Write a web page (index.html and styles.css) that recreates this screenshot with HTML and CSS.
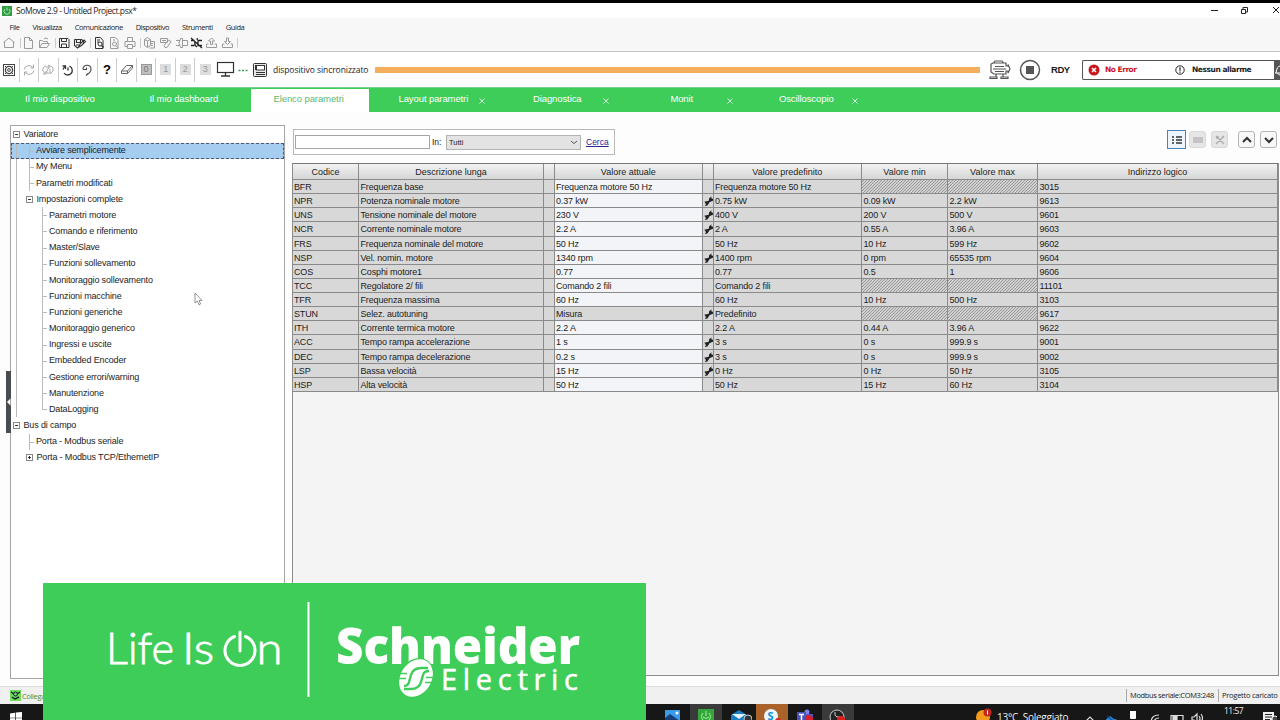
FILE: index.html
```html
<!DOCTYPE html>
<html lang="it">

<head>
    <meta charset="UTF-8">
    <meta name="viewport" content="width=device-width, initial-scale=1.0">
    <title>SoMove 2.9 - Untitled Project.psx*</title>
    <link rel="stylesheet" href="styles.css">
</head>

<body>
    <!-- shared icons -->
    <svg class="defs">
        <symbol id="wrench" viewBox="0 0 10 10">
            <path d="M2 8 L8 3" stroke="#222" stroke-width="2" />
            <path d="M5 5.500 L5 2.500 L7.500 .3 L7.200 2.500 L9.900 2.800 L8.600 5 L6.600 5.600 Z M.2 5.800 L3.600 5 L5 7 L3.400 9.400 L.8 9.900 L2.200 7.800 Z" fill="#222" />
        </symbol>
    </svg>

    <div class="window">
        <div class="titlebar">
            <svg class="app-icon" width="10" height="10" viewBox="0 0 10 10">
                <rect width="10" height="10" fill="#2f9e44" />
                <path d="M3 3a3 3 0 1 0 4 0M5 1.5v3" fill="none" stroke="#a8e6a8" stroke-width="1" />
            </svg>
            <span class="title">SoMove 2.9 - Untitled Project.psx*</span>
            <svg class="win-buttons" width="72" height="12" viewBox="0 0 72 12" fill="none" stroke="#222" stroke-width="1">
                <path d="M3 6.500h7M65 3l6 6M71 3l-6 6" />
                <path d="M33.500 5.500h4v4h-4zM35 5.500v-2h4.500v4.500h-2" />
            </svg>
        </div>

        <div class="menu">
            <span>File</span>
            <span>Visualizza</span>
            <span>Comunicazione</span>
            <span>Dispositivo</span>
            <span>Strumenti</span>
            <span>Guida</span>
        </div>

        <div class="quickbar">
            <svg width="242" height="16" viewBox="0 0 242 16" fill="none" stroke="#9a9a9a" stroke-width="1">
                <path d="M3.500 7.500l5.500-4.500 5.500 4.500M4.500 7v5.500h9v-5.500" />
                <path d="M24.500 2.500h5l3 3v8h-8zM29.500 2.500v3h3" />
                <path d="M39.500 12.500v-7h3l1 1h4v2M39.500 12.500l2.500-4h7.500l-2.500 4zM44 4q2-2 4 0" />
                <path d="M20.500 3v10M55.500 3v10M90.500 3v10M140.500 3v10M237.500 3v10" stroke="#ccc" />
                <g stroke="#333">
                    <path d="M59.500 3.500h8.500l1 1v8h-9.500zM61.500 3.500v3h5v-3M61.500 12.500v-3.500h5v3.500" />
                    <path d="M74.500 4.500h7l2 1.500v2M74.500 4.500v6l3 2.500 2-2M76.500 4.500v3h4v-3M79 12l1-3 4-4 1.500 1.500-4 4zM76 10h3" stroke-width="1.100" />
                    <path d="M95.500 2.500h5l2.500 3v8h-7.500zM97 5h3M97 7h2" />
                    <circle cx="100" cy="9" r="2" />
                    <path d="M101.500 10.500l2 2" stroke-width="1.500" />
                </g>
                <path d="M110.500 2.500h5l2.500 3v8h-7.500zM116 11l2 2M113 5h2" />
                <circle cx="114.500" cy="9" r="2" />
                <path d="M127.500 6v-3.500h5v3.500M127.500 11.500h-2.500v-5h10v5h-2.500M127.500 9.500h5v4h-5z" />
                <path d="M144.500 4.500l3-2 3 2v6l-3 2-3-2zM144.500 4.500l3 1.500 3-1.500M147.500 6v6M151 6.500h3.500v6.500h-5M151 8.500h2M151 10.500h2" />
                <path d="M160.500 3.500h7v4h-7zM162 5.500h4M168 5l3 1.500-4 6h-2l-1-2 4-5" />
                <path d="M176 5.500h4M176 10.500h4M180.500 3.500h2v9h-2q-3-4 0-9M183 5.500h4.500v5h-4.500" />
                <path d="M191 3l11 10M191 5.500h3.500M191 10.500h3.500M202 5.500h-4v5h4M196.500 4h1.500M195 6q-1 4 2 6" stroke="#222" stroke-width="1.300" />
                <path d="M206.500 9v3.500h10v-3.500h-2M206.500 9h2M210.500 9.500v-3.500h-2l3-3 3 3h-2v3.500z" />
                <path d="M222.500 9v3.500h10v-3.500h-2M222.500 9h2M226.500 3v3.500h-2l3 3 3-3h-2v-3.500z" />
            </svg>
        </div>

        <div class="toolbar">
            <div class="tool"><svg width="14" height="14" viewBox="0 0 14 14" fill="none" stroke="#444">
                    <rect x="1.500" y="1.500" width="11" height="11" />
                    <circle cx="7" cy="7" r="3.600" stroke-width="1.300" />
                    <circle cx="7" cy="7" r="1.400" />
                    <path d="M3 3l2 2M11 3l-2 2M3 11l2-2M11 11l-2-2" />
                </svg></div>
            <div class="tool"><svg width="14" height="14" viewBox="0 0 14 14" fill="none" stroke="#aaa">
                    <path d="M2 6.500a5 4.500 0 0 1 9-2M12 7.500a5 4.500 0 0 1-9 2M11.500 1.500v3.500h-3M2.500 12.500v-3.500h3" />
                </svg></div>
            <div class="tool"><svg width="14" height="14" viewBox="0 0 14 14" fill="none" stroke="#aaa">
                    <path d="M5 3q-4 1-3 5l2 3M2 11h3v-3M8 3q5 0 4 5l-3 3M9 6v5M5 4h3l-3 6h3M7 2l2 1.500-2 2" />
                </svg></div>
            <div class="tool"><svg width="14" height="14" viewBox="0 0 14 14" fill="none" stroke="#333" stroke-width="1.300">
                    <path d="M1.500 3h3v3M4.500 3.500q-2 1-2.500 3M8.500 3.200a4.600 4.600 0 1 1-5.500 7M7 4.500v3" />
                </svg></div>
            <div class="tool"><svg width="14" height="14" viewBox="0 0 14 14" fill="none" stroke="#444" stroke-width="1.100">
                    <path d="M3 6.500c-.5-5.500 8.500-6 8 0 0 2.500-2 4-4.500 5.500M3 6.500h3.500v-2M6 12.500l2-2" />
                </svg></div>
            <div class="tool help">?</div>
            <div class="tool"><svg width="14" height="14" viewBox="0 0 14 14" fill="none" stroke="#666">
                    <path d="M1.500 8l5-5.500h6l-5 5.500zM1.500 8v2.500h6l5-5.500v-2.500M7.500 8v2.500" />
                </svg></div>
            <div class="tool"><span class="num first">0</span></div>
            <div class="tool"><span class="num">1</span></div>
            <div class="tool"><span class="num">2</span></div>
            <div class="tool last"><span class="num">3</span></div>
            <svg class="link-icon" width="54" height="18" viewBox="0 0 54 18" fill="none" stroke="#333">
                <rect x="1.500" y="1.500" width="16" height="10" stroke-width="1.200" />
                <path d="M9.500 11.500v3M5 15h9" stroke-width="1.300" />
                <path d="M22.500 9.500h9" stroke="#3b9b5b" stroke-width="1.500" stroke-dasharray="2 1.500" />
                <rect x="37.500" y="2.500" width="13" height="13" rx="1" fill="#e8e8e8" />
                <rect x="40.500" y="4.500" width="8" height="4.500" fill="#fff" />
                <path d="M40 11.500h9M40 13.500h9M39.500 4v5" />
            </svg>
            <span class="sync">dispositivo sincronizzato</span>
            <div class="progress"></div>
            <svg class="motor" width="24" height="20" viewBox="0 0 24 20" fill="none" stroke="#555" stroke-width="1.200">
                <path d="M6 2.500l1-1.500h7l1.500 2h2.500v3h2v-1.500l2 4.500-2 4v-2h-2v3h-12l-3-2v-8l3-1.500zM5 3h13M7 6.500h9M5 9h13M7 11.500h9M8 14v3M15 14v3M2 18.500v-1.500h7v1.500zM13 18.500v-1.500h7v1.500z" />
            </svg>
            <svg class="stop" width="22" height="22" viewBox="0 0 22 22">
                <circle cx="11" cy="11" r="9.500" fill="none" stroke="#555" stroke-width="1.500" />
                <rect x="7" y="7" width="8" height="8" fill="#555" />
            </svg>
            <span class="rdy">RDY</span>
            <div class="alarms">
                <svg class="err-icon" width="12" height="12" viewBox="0 0 12 12">
                    <circle cx="6" cy="6" r="5.500" fill="#c8161d" />
                    <path d="M4 4l4 4M8 4l-4 4" stroke="#fff" stroke-width="1.600" />
                </svg>
                <span class="error">No Error</span>
                <svg width="10" height="10" viewBox="0 0 10 10" fill="none" stroke="#222">
                    <circle cx="5" cy="5" r="4.200" />
                    <path d="M5 2.300v3.500M5 6.600v1.200" stroke-width="1.200" />
                </svg>
                <span class="warn">Nessun allarme</span>
                <span class="bell"><svg width="6" height="16" viewBox="0 0 6 16" fill="none" stroke="#fff">
                        <path d="M1 12h5M2 12q1-7 4-7M3.500 12q1 2 2.500 2" />
                    </svg></span>
            </div>
        </div>

        <div class="tabs">
            <div class="tab first">Il mio dispositivo</div>
            <div class="tab second">Il mio dashboard</div>
            <div class="tab active">Elenco parametri</div>
            <div class="tab closable"><span>Layout parametri</span><svg class="close" width="6" height="6" viewBox="0 0 6 6"><path d="M.5 .5l5 5M5.500 .5l-5 5" /></svg></div>
            <div class="tab closable"><span>Diagnostica</span><svg class="close" width="6" height="6" viewBox="0 0 6 6"><path d="M.5 .5l5 5M5.500 .5l-5 5" /></svg></div>
            <div class="tab closable"><span>Monit</span><svg class="close" width="6" height="6" viewBox="0 0 6 6"><path d="M.5 .5l5 5M5.500 .5l-5 5" /></svg></div>
            <div class="tab closable"><span>Oscilloscopio</span><svg class="close" width="6" height="6" viewBox="0 0 6 6"><path d="M.5 .5l5 5M5.500 .5l-5 5" /></svg></div>
        </div>

        <div class="content">
            <div class="splitter"><span></span></div>

            <div class="tree">
                <ul>
                    <li class="node root"><b class="box"></b>Variatore</li>
                    <li class="node l1 selected">Avviare semplicemente</li>
                    <li class="node l1">My Menu</li>
                    <li class="node l1">Parametri modificati</li>
                    <li class="node l1 group"><b class="box"></b>Impostazioni complete</li>
                    <li class="node l2">Parametri motore</li>
                    <li class="node l2">Comando e riferimento</li>
                    <li class="node l2">Master/Slave</li>
                    <li class="node l2">Funzioni sollevamento</li>
                    <li class="node l2">Monitoraggio sollevamento</li>
                    <li class="node l2">Funzioni macchine</li>
                    <li class="node l2">Funzioni generiche</li>
                    <li class="node l2">Monitoraggio generico</li>
                    <li class="node l2">Ingressi e uscite</li>
                    <li class="node l2">Embedded Encoder</li>
                    <li class="node l2">Gestione errori/warning</li>
                    <li class="node l2">Manutenzione</li>
                    <li class="node l2 end">DataLogging</li>
                    <li class="node root bus"><b class="box"></b>Bus di campo</li>
                    <li class="node l1 plain">Porta - Modbus seriale</li>
                    <li class="node l1 group plain"><b class="box plus"></b>Porta - Modbus TCP/EthernetIP</li>
                </ul>
            </div>

            <div class="main">
                <div class="filter-row">
                    <div class="search">
                        <input type="text" class="search-input">
                        <span class="in">In:</span>
                        <div class="select">Tutti
                            <svg width="8" height="5" viewBox="0 0 8 5" fill="none" stroke="#555">
                                <path d="M1 1l3 2.500 3-2.500" />
                            </svg>
                        </div>
                        <a class="cerca">Cerca</a>
                    </div>
                    <div class="view-buttons">
                        <span class="vbtn on"><svg width="12" height="10" viewBox="0 0 12 10" stroke="#333">
                                <path d="M1 2h2M1 5h2M1 8h2M5 2h6M5 5h6M5 8h6" stroke-width="1.500" />
                            </svg></span>
                        <span class="vbtn off"><svg width="10" height="8" viewBox="0 0 10 8">
                                <rect y="1" width="10" height="6" fill="#c4c4c4" />
                            </svg></span>
                        <span class="vbtn off tools"><svg width="10" height="10" viewBox="0 0 10 10" stroke="#b0b0b0" fill="none">
                                <path d="M1 1l8 8M9 1l-8 8M1 3h2v-2M7 1.500l1.500 1.500" stroke-width="1.500" />
                            </svg></span>
                        <span class="vbtn up"><svg width="10" height="8" viewBox="0 0 10 8" fill="none" stroke="#333" stroke-width="2">
                                <path d="M1 6l4-4 4 4" />
                            </svg></span>
                        <span class="vbtn"><svg width="10" height="8" viewBox="0 0 10 8" fill="none" stroke="#333" stroke-width="2">
                                <path d="M1 2l4 4 4-4" />
                            </svg></span>
                    </div>
                </div>

                <div class="grid-panel">
                    <table>
                        <thead>
                            <tr><th>Codice</th><th>Descrizione lunga</th><th></th><th>Valore attuale</th><th></th><th>Valore predefinito</th><th>Valore min</th><th>Valore max</th><th>Indirizzo logico</th></tr>
                        </thead>
                        <tbody>
                            <tr><td>BFR</td><td>Frequenza base</td><td></td><td class="edit">Frequenza motore 50 Hz</td><td></td><td>Frequenza motore 50 Hz</td><td class="na"></td><td class="na"></td><td>3015</td></tr>
                            <tr><td>NPR</td><td>Potenza nominale motore</td><td></td><td class="edit">0.37 kW</td><td><svg><use href="#wrench" /></svg></td><td>0.75 kW</td><td>0.09 kW</td><td>2.2 kW</td><td>9613</td></tr>
                            <tr><td>UNS</td><td>Tensione nominale del motore</td><td></td><td class="edit">230 V</td><td><svg><use href="#wrench" /></svg></td><td>400 V</td><td>200 V</td><td>500 V</td><td>9601</td></tr>
                            <tr><td>NCR</td><td>Corrente nominale motore</td><td></td><td class="edit">2.2 A</td><td><svg><use href="#wrench" /></svg></td><td>2 A</td><td>0.55 A</td><td>3.96 A</td><td>9603</td></tr>
                            <tr><td>FRS</td><td>Frequenza nominale del motore</td><td></td><td class="edit">50 Hz</td><td></td><td>50 Hz</td><td>10 Hz</td><td>599 Hz</td><td>9602</td></tr>
                            <tr><td>NSP</td><td>Vel. nomin. motore</td><td></td><td class="edit">1340 rpm</td><td><svg><use href="#wrench" /></svg></td><td>1400 rpm</td><td>0 rpm</td><td>65535 rpm</td><td>9604</td></tr>
                            <tr><td>COS</td><td>Cosphi motore1</td><td></td><td class="edit">0.77</td><td></td><td>0.77</td><td>0.5</td><td>1</td><td>9606</td></tr>
                            <tr><td>TCC</td><td>Regolatore 2/ fili</td><td></td><td class="edit">Comando 2 fili</td><td></td><td>Comando 2 fili</td><td class="na"></td><td class="na"></td><td>11101</td></tr>
                            <tr><td>TFR</td><td>Frequenza massima</td><td></td><td class="edit">60 Hz</td><td></td><td>60 Hz</td><td>10 Hz</td><td>500 Hz</td><td>3103</td></tr>
                            <tr><td>STUN</td><td>Selez. autotuning</td><td></td><td>Misura</td><td><svg><use href="#wrench" /></svg></td><td>Predefinito</td><td class="na"></td><td class="na"></td><td>9617</td></tr>
                            <tr><td>ITH</td><td>Corrente termica motore</td><td></td><td class="edit">2.2 A</td><td></td><td>2.2 A</td><td>0.44 A</td><td>3.96 A</td><td>9622</td></tr>
                            <tr><td>ACC</td><td>Tempo rampa accelerazione</td><td></td><td class="edit">1 s</td><td><svg><use href="#wrench" /></svg></td><td>3 s</td><td>0 s</td><td>999.9 s</td><td>9001</td></tr>
                            <tr><td>DEC</td><td>Tempo rampa decelerazione</td><td></td><td class="edit">0.2 s</td><td><svg><use href="#wrench" /></svg></td><td>3 s</td><td>0 s</td><td>999.9 s</td><td>9002</td></tr>
                            <tr><td>LSP</td><td>Bassa velocità</td><td></td><td class="edit">15 Hz</td><td><svg><use href="#wrench" /></svg></td><td>0 Hz</td><td>0 Hz</td><td>50 Hz</td><td>3105</td></tr>
                            <tr><td>HSP</td><td>Alta velocità</td><td></td><td class="edit">50 Hz</td><td></td><td>50 Hz</td><td>15 Hz</td><td>60 Hz</td><td>3104</td></tr>
                        </tbody>
                    </table>
                </div>
            </div>
        </div>

        <div class="statusbar">
            <svg width="11" height="11" viewBox="0 0 11 11">
                <rect width="11" height="11" fill="#6fdc5a" />
                <path d="M1 2l3 2M10 2l-3 2M2 7l3 2 4-2" stroke="#123" stroke-width="1.500" fill="none" />
                <circle cx="5.500" cy="4" r="2" fill="none" stroke="#123" />
            </svg>
            <span class="connected">Collegato</span>
            <span class="cell">Modbus seriale:COM3:248</span>
            <span class="cell end">Progetto caricato</span>
        </div>

        <div class="taskbar">
            <div class="start"><svg width="12" height="12" viewBox="0 0 12 12" fill="#fff">
                    <path d="M0 1.500l5-.8v5h-5zM5.700 .6l6.300-.6v5.700h-6.300zM0 6.300h5v5l-5-.8zM5.700 6.300h6.300v5.700l-6.300-.6z" />
                </svg></div>
            <div class="apps">
                <span><svg width="18" height="12" viewBox="0 0 18 12">
                        <rect x="1" y="1" width="15" height="11" fill="#3a9be8" />
                        <path d="M1 9l5-4 10 7h-15z" fill="#173f78" />
                        <circle cx="13" cy="4" r="1.500" fill="#fff" />
                    </svg></span>
                <span class="running"><svg width="18" height="12" viewBox="0 0 18 12">
                        <rect x="1" width="16" height="12" fill="#32a83a" />
                        <path d="M6 4a5 5 0 0 0 0 7M12 4a5 5 0 0 1 0 7M9 2v5M6 8q3 3 6 0" stroke="#a9f0a0" fill="none" />
                    </svg></span>
                <span><svg width="22" height="12" viewBox="0 0 22 12">
                        <path d="M1 6l8-5 8 5v6h-16z" fill="#1a7fc4" />
                        <path d="M2 5h14l-7 5z" fill="#e4f3fd" />
                        <circle cx="18" cy="10" r="4" fill="#333" stroke="#ccc" />
                    </svg></span>
                <span class="skype"><svg width="18" height="12" viewBox="0 0 18 12">
                        <circle cx="8" cy="7" r="7" fill="#e8f7ff" />
                        <text x="4.500" y="11" class="skype-s">S</text>
                        <circle cx="15" cy="12" r="3" fill="#d22" />
                    </svg></span>
                <span><svg width="18" height="12" viewBox="0 0 18 12">
                        <circle cx="11" cy="3" r="2.500" fill="#7b83eb" />
                        <path d="M9 5h8v7h-8z" fill="#5059c9" />
                        <rect x="1" y="3" width="9" height="9" fill="#4b53bc" />
                        <path d="M3 5.500h5M5.500 5.500v6" stroke="#fff" stroke-width="1.500" />
                        <circle cx="13" cy="10" r="4" fill="#d3202e" />
                    </svg></span>
                <span class="running"><svg width="18" height="12" viewBox="0 0 18 12">
                        <circle cx="8" cy="8" r="7" fill="#222" stroke="#ccc" />
                        <path d="M8 8q-3-1-2-5M8 8q4-1 5 1" stroke="#ccc" fill="none" />
                        <circle cx="12" cy="11" r="4" fill="#e01b1b" />
                    </svg></span>
            </div>
            <div class="weather">
                <svg width="18" height="13" viewBox="0 0 18 13">
                    <circle cx="7" cy="9" r="7" fill="#f29b1d" />
                    <circle cx="11.500" cy="4.500" r="4" fill="#c3281e" />
                    <path d="M11.500 2.500v4" stroke="#fff" />
                </svg>
                <span>13°C&nbsp; Soleggiato</span>
            </div>
            <svg class="tray" width="122" height="14" viewBox="0 0 122 14" fill="none" stroke="#ddd" stroke-width="1.200">
                <path d="M3 10l4-4 4 4" />
                <path d="M24 13q-3-5 1-6l2-2 4 3q5 0 4 6z" fill="#2b88d8" stroke="none" />
                <path d="M24 5l11 9" stroke="#0c4f8c" />
                <rect x="47" y="-1" width="6" height="9" rx="1" fill="#fff" stroke="none" />
                <path d="M45 10h10" stroke-width="2" />
                <path d="M68 12q0-8 8-8M71 12q0-5 5-5M74 12q0-2 2-2" />
                <path d="M88 4.500h12v6h-12z" />
                <path d="M90 5h4v5h-4z" fill="#ddd" />
                <path d="M109 6h2l3-3v9l-3-3h-2zM116 5q2 2.500 0 5M118 3q3 4 0 8" />
            </svg>
            <span class="clock">11:57</span>
            <svg class="notes" width="14" height="12" viewBox="0 0 14 12">
                <path d="M0 2h11v10h-11z" fill="#eee" />
                <path d="M2 4.500h7M2 7h7M2 9.500h5" stroke="#222" />
                <circle cx="12" cy="9" r="3" fill="#444" stroke="#eee" />
            </svg>
        </div>
    </div>

    <svg class="cursor" width="9" height="14" viewBox="0 0 9 14">
        <path d="M1 1v10l2.300-2 1.700 3.800 1.600-.8-1.600-3.500h3z" fill="#fff" stroke="#777" stroke-width=".8" />
    </svg>

    <div class="banner">
        <svg width="603" height="137" viewBox="0 0 603 137">
            <g class="life">
                <text x="63" y="81" textLength="68" lengthAdjust="spacingAndGlyphs">Life</text>
                <text x="139" y="81" textLength="32" lengthAdjust="spacingAndGlyphs">Is</text>
                <text x="213.500" y="81" textLength="26" lengthAdjust="spacingAndGlyphs">n</text>
            </g>
            <path d="M191.500 53.500a15 15 0 1 0 11 0M197 49v19" fill="none" stroke="#fff" stroke-width="3" stroke-linecap="round" />
            <path d="M265.500 19v95" stroke="#fff" stroke-width="2" />
            <text class="schneider" x="293" y="80.500" textLength="244" lengthAdjust="spacingAndGlyphs">Schneider</text>
            <text class="electric" x="398" y="107" textLength="137">Electric</text>
            <!-- oval emblem -->
            <g transform="translate(373 95)">
                <ellipse rx="17" ry="21" transform="rotate(32)" fill="#3dcd58" />
                <ellipse rx="15.500" ry="20" transform="rotate(32)" fill="#fff" />
                <path d="M12 -10h-7q-8 0-10 7l-2 7q-1 4-5 4M-12 11h7q8 0 10-7l2-7q1-4 6-4" fill="none" stroke="#3dcd58" stroke-width="2.400" />
                <path d="M-20 -4.500h11M-21 .5h11M10 -.5h12M9 4.500h12" stroke="#3dcd58" stroke-width="1.500" />
            </g>
        </svg>
    </div>
</body>

</html>
```

FILE: styles.css
```css
* {
    margin: 0;
    padding: 0;
    box-sizing: border-box;
}

body {
    width: 1280px;
    height: 720px;
    overflow: hidden;
    position: relative;
    background-color: #fff;
    font-family: "Liberation Sans", Arial, sans-serif;
    font-size: 9px;
    color: #1c1c1c;
}

svg {
    display: block;
    flex-shrink: 0;
}

.defs {
    width: 0;
    height: 0;
    position: absolute;
}

.window {
    height: 720px;
    border-top: 3px solid #000;
    display: flex;
    flex-direction: column;
}

.titlebar,
.menu,
.sync,
.statusbar {
    font-family: "Open Sans", "Noto Sans", sans-serif;
    white-space: nowrap;
}

.titlebar {
    height: 15px;
    display: flex;
    align-items: center;
    padding-left: 2px;
    background-color: #fff;
}

.title {
    margin-left: 4px;
    font-size: 8.5px;
    letter-spacing: -0.43px;
    flex: 1;
}

.win-buttons {
    margin-bottom: 2px;
}

.menu {
    height: 17px;
    display: flex;
    align-items: center;
    gap: 13px;
    padding-left: 9.5px;
    font-size: 7.5px;
    letter-spacing: -0.45px;
    background-color: #f7f7f7;
}

.quickbar {
    height: 17px;
    background-color: #f7f7f7;
    border-bottom: 1px solid #c4c4c4;
}

.toolbar {
    height: 35px;
    display: flex;
    align-items: center;
    background-color: #fff;
}

.tool {
    width: 19.55px;
    height: 24px;
    display: flex;
    align-items: center;
    justify-content: center;
    border-right: 1px solid #ccc;
}

.tool.last {
    border-right: none;
}

.tool.help {
    font-size: 13px;
    font-weight: bold;
    color: #000;
}

.num {
    width: 11px;
    height: 11px;
    line-height: 11px;
    text-align: center;
    font-size: 9px;
    color: #999;
    background-color: #ddd;
}

.num.first {
    background-color: #c0c0c0;
    border: 1px solid #999;
    line-height: 9px;
    color: #777;
}

.link-icon {
    margin-left: 1px;
}

.sync {
    width: 105px;
    padding-left: 3px;
    font-size: 8.5px;
    letter-spacing: -0.06px;
}

.progress {
    width: 605px;
    height: 6px;
    background-color: #f5ae5c;
}

.motor {
    margin-left: 8px;
}

.stop {
    margin-left: 7px;
}

.rdy {
    margin-left: 10px;
    width: 31px;
    font-size: 9.5px;
    font-weight: bold;
    letter-spacing: -0.5px;
}

.alarms {
    flex: 1;
    height: 20px;
    display: flex;
    align-items: center;
    border: 1px solid #555;
    border-right: none;
    border-radius: 2px 0 0 2px;
    padding-left: 5px;
    font-family: "DejaVu Sans", sans-serif;
    font-size: 7.5px;
    font-weight: bold;
    white-space: nowrap;
}

.error {
    width: 70px;
    margin-left: 5px;
    color: #c8161d;
    letter-spacing: -0.5px;
}

.warn {
    flex: 1;
    margin-left: 7px;
    letter-spacing: -0.45px;
}

.bell {
    width: 6px;
    height: 18px;
    background-color: #555;
}

.tabs {
    height: 25px;
    display: flex;
    background-color: #3dcd58;
    border-top: 1px solid #7ccf8b;
    color: #fff;
    font-size: 9.5px;
    line-height: 22px;
}

.tab.first {
    width: 126px;
    padding-left: 25px;
}

.tab.second {
    width: 125px;
    padding-left: 23.5px;
    letter-spacing: -0.1px;
}

.tab.active {
    width: 118px;
    padding-left: 22.5px;
    margin-right: 1.5px;
    background-color: #fff;
    color: #5fb873;
    border-top: 1px solid #3dcd58;
    line-height: 20px;
    letter-spacing: -0.1px;
}

.tab.closable {
    width: 124.5px;
    display: grid;
    grid-template-columns: 28px 1fr 28px;
    text-align: center;
    letter-spacing: -0.1px;
}

.closable span {
    grid-column: 2;
    white-space: nowrap;
}

.close {
    margin: 10px auto 0 11px;
    fill: none;
    stroke: #e4fae8;
    stroke-width: 0.9;
}

.content {
    height: 574px;
    display: flex;
    padding-top: 13px;
    background-color: #fdfdfd;
}

.splitter {
    width: 10px;
    padding: 246px 0 0 6px;
}

.splitter span {
    display: block;
    width: 5px;
    height: 62px;
    background-color: #4a4d4f;
    clip-path: polygon(0 0, 100% 0, 100% 27px, 1px 31px, 100% 35px, 100% 100%, 0 100%);
}

.tree {
    width: 275px;
    height: 554px;
    border: 1px solid #a5a5a5;
    background-color: #fff;
    letter-spacing: -0.15px;
}

.tree ul {
    list-style: none;
    padding-top: 0.4px;
}

.node {
    height: 16.18px;
    line-height: 17px;
    display: flex;
    align-items: center;
    white-space: nowrap;
    /* dotted guide of the top level */
    background: linear-gradient(#bbb, #bbb) 5px 0 / 1px 100% no-repeat;
}

.node.root {
    padding-left: 1.500px;
    background: none;
}

.node.l1 {
    padding-left: 25px;
    background: linear-gradient(#bbb, #bbb) 5px 0 / 1px 100% no-repeat,
        linear-gradient(#bbb, #bbb) 18px 0 / 1px 100% no-repeat,
        linear-gradient(#bbb, #bbb) 18px 8px / 5px 1px no-repeat;
}

.node.l1.plain {
    background: linear-gradient(#bbb, #bbb) 18px 0 / 1px 100% no-repeat,
        linear-gradient(#bbb, #bbb) 18px 8px / 5px 1px no-repeat;
}

.node.l1.selected {
    background-color: #a5cdf0;
    outline: 1px dashed #557;
    outline-offset: -1px;
}

.node.l1.group {
    padding-left: 14.500px;
    background: linear-gradient(#bbb, #bbb) 5px 0 / 1px 100% no-repeat;
}

.node.l1.group.plain {
    background: none;
}

.node.l2 {
    padding-left: 38px;
    background: linear-gradient(#bbb, #bbb) 5px 0 / 1px 100% no-repeat,
        linear-gradient(#bbb, #bbb) 31px 0 / 1px 100% no-repeat,
        linear-gradient(#bbb, #bbb) 31px 8px / 5px 1px no-repeat;
}

.node.l2.end {
    background: linear-gradient(#bbb, #bbb) 5px 0 / 1px 100% no-repeat,
        linear-gradient(#bbb, #bbb) 31px 0 / 1px 9px no-repeat,
        linear-gradient(#bbb, #bbb) 31px 8px / 5px 1px no-repeat;
}

.box {
    width: 7px;
    height: 7px;
    margin-right: 4px;
    border: 1px solid #888;
    background: linear-gradient(#333, #333) 1px 2px / 3px 1px no-repeat #fff;
}

.box.plus {
    background: linear-gradient(#333, #333) 1px 2px / 3px 1px no-repeat,
        linear-gradient(#333, #333) 2px 1px / 1px 3px no-repeat #fff;
}

.main {
    width: 987px;
    margin-left: 7px;
}

.filter-row {
    height: 38px;
    display: flex;
    align-items: flex-start;
    justify-content: space-between;
    padding-top: 4px;
}

.search {
    width: 322px;
    height: 26px;
    margin-left: 1px;
    display: flex;
    align-items: center;
    padding-left: 1px;
    border: 1px solid #b9b9b9;
    background-color: #fff;
}

.search-input {
    width: 135px;
    height: 14px;
    border: 1px solid #a5a5a5;
    outline: none;
}

.in {
    width: 16px;
    padding-left: 2px;
    font-size: 8.5px;
}

.select {
    width: 135px;
    height: 15px;
    display: flex;
    align-items: center;
    justify-content: space-between;
    padding: 0 2px;
    border: 1px solid #b3b3b3;
    background-color: #e3e3e3;
    font-size: 7.5px;
}

.cerca {
    margin-left: 5px;
    font-size: 8.5px;
    color: #2b2390;
    text-decoration: underline;
}

.view-buttons {
    display: flex;
    padding: 1px 1px 0 0;
}

.vbtn {
    width: 17px;
    height: 17px;
    margin: 1px 1px 0 4px;
    display: flex;
    align-items: center;
    justify-content: center;
    border: 1px solid #b5b5b5;
    border-radius: 3px;
    background-color: #f8f8f8;
}

.vbtn.on {
    width: 19px;
    height: 19px;
    margin: 0 -1px 0 4px;
    border: 1px solid #4a83b5;
    border-radius: 0;
    background-color: #edf4fb;
}

.vbtn.off {
    border-color: #d8d8d8;
    background-color: #e6e6e6;
}

.vbtn.up {
    margin-left: 9px;
}

.grid-panel {
    height: 513px;
    border: 1px solid #8c8c8c;
    border-top: none;
    background-color: #f4f4f4;
}

table,
thead,
tbody {
    display: block;
}

table {
    border-top: 1px solid #777;
    letter-spacing: -0.15px;
}

tr {
    display: grid;
    grid-template-columns: 66px 185px 10.5px 148.5px 10.500px 148.5px 86px 90px 1fr;
}

tbody tr {
    height: 14.14px;
}

thead tr {
    height: 16px;
}

th,
td {
    border-right: 1px solid #8a8a8a;
    border-bottom: 1px solid #8a8a8a;
    white-space: nowrap;
    overflow: hidden;
}

th {
    font-weight: normal;
    font-size: 9px;
    line-height: 16px;
    letter-spacing: 0;
    background: linear-gradient(#f2f2f2, #d5d6d6);
}

td {
    padding-left: 1.5px;
    line-height: 14px;
    background-color: #d8d8d8;
}

td:first-child {
    padding-left: 1px;
}

td.edit {
    background-color: #f2f4f8;
}

td.na {
    background: repeating-linear-gradient(135deg, #d0d0d0 0 1.400px, #999 1.400px 2.100px);
}

td svg {
    width: 10px;
    height: 10px;
    margin: 2px 0 0 -1px;
}

.statusbar {
    height: 18px;
    display: flex;
    align-items: center;
    padding-left: 10px;
    border-top: 1px solid #ddd;
    background-color: #f0f0f0;
    font-size: 7.5px;
    letter-spacing: -0.35px;
}

.connected {
    flex: 1;
    margin-left: 1px;
    color: #3f8f3f;
}

.cell {
    width: 92px;
    height: 13px;
    line-height: 13px;
    padding-left: 3px;
    border-left: 1px solid #aaa;
}

.cell.end {
    width: 62px;
    letter-spacing: -0.25px;
}

.taskbar {
    height: 16px;
    display: flex;
    background-color: #171717;
    color: #eee;
    font-family: "Open Sans", sans-serif;
    overflow: hidden;
}

.start {
    width: 32px;
    padding: 8px 0 0 10px;
}

.apps {
    display: flex;
    margin-left: 625px;
}

.apps span {
    width: 32px;
    height: 16px;
    margin-right: 1px;
    padding: 5px 0 0 7px;
}

.apps .running {
    background-color: #3a3a3a;
}

.apps .skype {
    background-color: #a9622a;
}

.skype-s {
    font: bold 11px "Open Sans", sans-serif;
    fill: #0b8fd0;
}

.weather {
    display: flex;
    margin: 4px 0 0 121px;
    width: 107px;
    font-size: 10px;
    line-height: 18px;
    letter-spacing: -0.25px;
    white-space: nowrap;
}

.weather span {
    margin-left: 3px;
}

.tray {
    margin-top: 7px;
}

.clock {
    margin-left: 19px;
    width: 39px;
    font-size: 8.5px;
    line-height: 14px;
    letter-spacing: -0.5px;
}

.notes {
    margin-top: 6px;
}

.cursor {
    position: absolute;
    left: 194px;
    top: 292px;
}

.banner {
    position: absolute;
    left: 43px;
    top: 583px;
    width: 603px;
    height: 137px;
    background-color: #3dcd58;
}

.life {
    font-family: Lato, sans-serif;
    font-weight: 300;
    font-size: 43px;
    fill: #fff;
    stroke: #fff;
    stroke-width: 0.8;
}

.schneider {
    font-family: "Open Sans", sans-serif;
    font-weight: 800;
    font-size: 49px;
    fill: #fff;
}

.electric {
    font-family: "Open Sans", sans-serif;
    font-size: 29px;
    fill: #fff;
    stroke: #fff;
    stroke-width: 0.5;
}
```
